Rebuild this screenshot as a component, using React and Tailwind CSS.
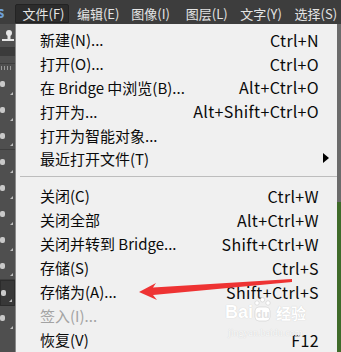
import React from 'react';

const topMenus = [
    { label: '文件(F)', active: true },
    { label: '编辑(E)' },
    { label: '图像(I)' },
    { label: '图层(L)' },
    { label: '文字(Y)' },
    { label: '选择(S)' },
];

const firstGroup = [
    { label: '新建(N)...', key: 'Ctrl+N' },
    { label: '打开(O)...', key: 'Ctrl+O' },
    { label: '在 Bridge 中浏览(B)...', key: 'Alt+Ctrl+O' },
    { label: '打开为...', key: 'Alt+Shift+Ctrl+O' },
    { label: '打开为智能对象...' },
    { label: '最近打开文件(T)', sub: true },
];

const secondGroup = [
    { label: '关闭(C)', key: 'Ctrl+W' },
    { label: '关闭全部', key: 'Alt+Ctrl+W' },
    { label: '关闭并转到 Bridge...', key: 'Shift+Ctrl+W' },
    { label: '存储(S)', key: 'Ctrl+S' },
    { label: '存储为(A)...', key: 'Shift+Ctrl+S' },
    { label: '签入(I)...', disabled: true },
    { label: '恢复(V)', key: 'F12' },
];

function MenuRow({ item, h }) {
    return (
        <div className={`flex items-center justify-between pl-[24px] pr-[18px] ${h} ${item.disabled ? 'text-[#a3a3a3]' : 'text-[#0a0a0a]'}`}>
            <span>{item.label}</span>
            {item.key && <span className="text-[16px] tracking-[0.35px]">{item.key}</span>}
            {item.sub && (
                <svg width="6" height="10" viewBox="0 0 6 10" className="-mr-[10px] mt-[-2px]">
                    <path d="M0 0 L6 5 L0 10 Z" fill="#000" />
                </svg>
            )}
        </div>
    );
}

function Toolbar() {
    return (
        <div className="w-[15px] shrink-0 bg-[#4f4f4f] flex flex-col">
            <div className="h-[24px] flex items-center justify-end pr-[1px] border-b border-[#3a3a3a]">
                <svg width="12" height="14" viewBox="0 0 12 14">
                    <circle cx="7" cy="4" r="3" fill="#e6e6e6" />
                    <rect x="5.5" y="6" width="3" height="4" fill="#e6e6e6" />
                    <rect x="0" y="10" width="12" height="2" fill="#e6e6e6" />
                </svg>
            </div>
            <div className="h-[8px] bg-[#3b3b3b]" />
            <div className="h-[8px] border-b border-[#3e3e3e]" />
            <div className="h-[8px] flex items-center gap-[2px] pl-[1px]">
                <div className="w-[1px] h-[4px] bg-[#9a9a9a]" />
                <div className="w-[1px] h-[4px] bg-[#9a9a9a]" />
                <div className="w-[1px] h-[4px] bg-[#9a9a9a]" />
                <div className="w-[1px] h-[4px] bg-[#9a9a9a]" />
            </div>
            {[0, 1, 2, 3, 4, 5, 6, 7, 8, 9].map((i) => (
                <div key={i} className={`relative h-[26px] ${i === 2 || i === 7 ? 'border-b border-[#3e3e3e]' : ''} ${i === 8 ? 'bg-[#383838] border border-[#2c2c2c]' : ''}`}>
                    <div className="absolute left-0 top-[9px] w-[5px] h-[6px] rounded-[2px] bg-[#c9c9c9]" />
                    <div className="absolute right-[2px] bottom-[3px] w-0 h-0 border-l-[3px] border-l-transparent border-b-[3px] border-b-[#bdbdbd]" />
                </div>
            ))}
        </div>
    );
}

export default function App() {
    return (
        <div className="relative w-[341px] h-[352px] overflow-hidden bg-[#3d3d3d] font-['Noto_Sans_CJK_SC','Noto_Sans',sans-serif]">
            <div className="h-[24px] flex items-end text-[13px] text-[#e4e4e4]">
                <div className="w-[15px] h-[24px] flex items-center overflow-hidden">
                    <span className="text-[15px] font-bold text-[#6e9fd6] -ml-[3px]">s</span>
                </div>
                {topMenus.map((m) => (
                    <div
                        key={m.label}
                        className={`h-[19px] flex items-center mb-[1px] ${m.active ? 'w-[56px] pl-[7px] bg-[#2c2c2c] border border-[#232323] rounded-t-[2px]' : 'w-[56px] pl-[8px]'}`}
                    >
                        {m.label}
                    </div>
                ))}
            </div>

            <div className="flex h-[328px]">
                <Toolbar />
                <div className="w-[322px] shrink-0 bg-[#f0f0f0] border-l border-[#8a8a8a] text-[15px] leading-none pt-[4px]">
                    {firstGroup.map((item) => (
                        <MenuRow key={item.label} item={item} h="h-[23.8px]" />
                    ))}
                    <div className="pt-[5px] pb-[7px] pl-[4px]">
                        <div className="h-[1px] bg-[#bdbdbd]" />
                    </div>
                    {secondGroup.map((item) => (
                        <MenuRow key={item.label} item={item} h="h-[24px]" />
                    ))}
                </div>
                <div className="flex-1 flex flex-col">
                    <div className="flex-1 bg-[#6b6b6b]" />
                    <div className="h-[150px] bg-[#3f6b2a]" />
                </div>
            </div>

            <div className="absolute left-[225px] top-[297px] text-white [text-shadow:0_0_1px_#c4c4c4] pointer-events-none">
                <div className="flex items-end">
                    <span className="text-[18px] font-bold font-['Liberation_Sans',sans-serif] leading-none mb-[1px]">Bai</span>
                    <div className="relative w-[17px] h-[25px] ml-[1px]">
                        <svg width="17" height="25" viewBox="0 0 17 25" className="absolute left-0 top-0">
                            <circle cx="3" cy="6" r="2.2" fill="#fff" stroke="#cfcfcf" strokeWidth="0.6" />
                            <circle cx="8.5" cy="2.8" r="2.2" fill="#fff" stroke="#cfcfcf" strokeWidth="0.6" />
                            <circle cx="14" cy="6" r="2.2" fill="#fff" stroke="#cfcfcf" strokeWidth="0.6" />
                            <rect x="1" y="10" width="15" height="14" rx="4" fill="#fff" stroke="#cfcfcf" strokeWidth="0.6" />
                        </svg>
                        <span className="absolute left-[2px] bottom-[2px] text-[11px] font-bold font-['Liberation_Sans',sans-serif] leading-none text-[#e2e2e2] [text-shadow:none]">du</span>
                    </div>
                    <span className="text-[15px] font-bold leading-none ml-[5px] mb-[2px]">经验</span>
                </div>
                <div className="text-[10px] font-['Liberation_Serif',serif] mt-[6px] ml-[3px] leading-none text-[#fafafa]">jingyan.baidu.com</div>
            </div>

            <svg className="absolute left-0 top-0 pointer-events-none" width="341" height="352" viewBox="0 0 341 352">
                <path d="M139 292 L156 283 L153 287.5 L292 279 L292 282 L153 295 L157 300 Z" fill="#ee3333" />
            </svg>
        </div>
    );
}
